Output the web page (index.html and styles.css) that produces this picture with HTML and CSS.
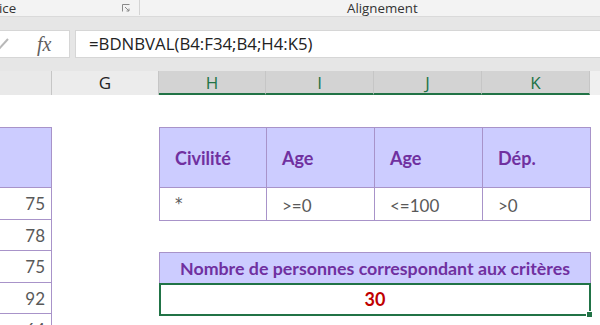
FILE: index.html
```html
<!DOCTYPE html>
<html lang="fr">
<head>
    <meta charset="UTF-8">
    <meta name="viewport" content="width=device-width, initial-scale=1.0">
    <title>BDNBVAL</title>
    <link rel="stylesheet" href="styles.css">
</head>
<body>
    <div class="ribbon">
        <div class="group groupLeft">
            <span class="groupName">ice</span>
            <svg class="launcher" width="8" height="8" viewBox="0 0 8 8">
                <path d="M0.5 7.5V0.5H7.5" fill="none" stroke="#8a8a8a" stroke-width="1"/>
                <path d="M3 3L7 7M4.5 7H7V4.5" fill="none" stroke="#8a8a8a" stroke-width="1"/>
            </svg>
        </div>
        <div class="group groupAlign">
            <span class="groupName">Alignement</span>
        </div>
    </div>

    <div class="formulaRow">
        <div class="nameBox">
            <svg class="check" width="10" height="14" viewBox="0 0 10 14">
                <path d="M-2 13L8 2" fill="none" stroke="#b8b8b8" stroke-width="2"/>
            </svg>
            <span class="fx">fx</span>
        </div>
        <div class="formula">=BDNBVAL(B4:F34;B4;H4:K5)</div>
    </div>

    <div class="colHeaders">
        <div class="colHead colF"></div>
        <div class="colHead colG">G</div>
        <div class="colHead sel wide107">H</div>
        <div class="colHead sel wide108">I</div>
        <div class="colHead sel wide108">J</div>
        <div class="colHead sel wide108">K</div>
        <div class="colHead colRest"></div>
    </div>

    <div class="sheet">
        <div class="leftTable">
            <div class="cell headCell"></div>
            <div class="cell num">75</div>
            <div class="cell num">78</div>
            <div class="cell num">75</div>
            <div class="cell num">92</div>
            <div class="cell num">64</div>
        </div>

        <div class="colSpacer"></div>

        <div class="rightBlock">
            <table class="criteria">
                <colgroup>
                    <col class="c107">
                    <col class="c108">
                    <col class="c108">
                    <col class="c108">
                </colgroup>
                <tr class="critHead">
                    <th>Civilité</th>
                    <th>Age</th>
                    <th>Age</th>
                    <th>Dép.</th>
                </tr>
                <tr class="critRow">
                    <td class="star">*</td>
                    <td>&gt;=0</td>
                    <td>&lt;=100</td>
                    <td>&gt;0</td>
                </tr>
            </table>

            <div class="resultHead">Nombre de personnes correspondant aux critères</div>
            <div class="resultBox">
                30
                <span class="handle"></span>
            </div>
        </div>
    </div>
</body>
</html>
```

FILE: styles.css
```css
body{
    margin: 0;
    width: 600px; height: 325px;
    overflow: hidden;
    background-color: #ffffff;
    font-family: "Open Sans", "Noto Sans", sans-serif;
}

/* ribbon strip */
.ribbon{
    display: flex;
    height: 17px;
    background-color: #f3f3f3;
    border-bottom: 1px solid #dadada;
    box-sizing: border-box;
}
.group{
    display: flex; align-items: center;
    height: 15px;
    font-size: 13.3px; color: #333;
}
.groupLeft{
    width: 140px;
    border-right: 1px solid #d4d4d4;
    box-sizing: border-box;
    justify-content: space-between;
    padding-right: 9px;
}
.groupLeft .groupName{ margin-left: -1px; }
.launcher{ margin-top: 1px; }
.groupAlign{
    flex: 1;
    padding-left: 207px;
}

/* formula bar */
.formulaRow{
    display: flex;
    gap: 5px;
    height: 41px;
    padding-top: 13px;
    box-sizing: border-box;
    background-color: #e6e6e6;
}
.nameBox, .formula{
    background-color: #fff;
    border-top: 1px solid #d6d6d6;
    border-bottom: 1px solid #d6d6d6;
    height: 28px;
    box-sizing: border-box;
}
.nameBox{
    width: 70px;
    display: flex; align-items: center;
    border-right: 1px solid #d6d6d6;
}
.fx{
    margin-left: 27px;
    font-family: "Liberation Serif", serif;
    font-style: italic;
    font-size: 20px;
    color: #606060;
}
.formula{
    flex: 1;
    border-left: 1px solid #d6d6d6;
    padding-left: 13px;
    font-size: 16.8px;
    line-height: 26px;
    color: #222;
}

/* column letters */
.colHeaders{
    display: flex;
    height: 37px;
    padding-top: 13px;
    box-sizing: border-box;
    background-color: #e6e6e6;
}
.colHead{
    height: 24px;
    box-sizing: border-box;
    border-right: 1px solid #c6c6c6;
    background-color: #e6e6e6;
    text-align: center;
    font-size: 17px; line-height: 24px;
    color: #222;
}
.colF{ width: 52px; background-color: #e9e9e9; }
.colG{ width: 107px; background-color: #ececec; }
.sel{
    background-color: #d3d3d3;
    color: #217346;
    border-bottom: 2px solid #217346;
    line-height: 23px;
}
.wide107{ width: 107px; }
.wide108{ width: 108px; }
.colRest{ flex: 1; border-right: none; background-color: #f0f0f0; }

/* sheet */
.sheet{
    display: flex;
    padding-top: 32px;
}
.leftTable{
    width: 52px;
    display: flex; flex-direction: column;
}
.cell{
    border-right: 1px solid #a893c9;
    border-bottom: 1px solid #a893c9;
    box-sizing: border-box;
    height: 31.5px;
}
.headCell{
    height: 61px;
    border-top: 1px solid #a893c9;
    background-color: #ccccff;
}
.num{
    text-align: right;
    padding-right: 6px;
    font-size: 17px;
    line-height: 31px;
    color: #595959;
    font-family: "Lato", "Open Sans", sans-serif;
}
.colSpacer{ width: 107px; }

.rightBlock{
    width: 432px;
    display: flex; flex-direction: column;
}
.criteria{
    border-collapse: collapse;
    table-layout: fixed;
    width: 432px;
    font-family: "Lato", "Open Sans", sans-serif;
}
.c107{ width: 107px; }
.c108{ width: 108px; }
.criteria th, .criteria td{
    border: 1px solid #a893c9;
    text-align: left;
    padding: 0 0 0 15px;
}
.critHead th{
    height: 59px;
    background-color: #ccccff;
    color: #7030a0;
    font-size: 18px;
    font-weight: bold;
}
.critRow td{
    height: 30px;
    color: #595959;
    font-size: 17px;
    padding-top: 2px;
}
.critRow .star{
    font-family: "DejaVu Sans", sans-serif;
    font-size: 15px;
    padding-top: 0;
}

.resultHead{
    margin-top: 31px;
    height: 31px;
    box-sizing: border-box;
    background-color: #ccccff;
    border: 1px solid #a893c9;
    border-bottom: none;
    text-align: center;
    color: #7030a0;
    font-family: "Lato", "Open Sans", sans-serif;
    font-weight: bold;
    font-size: 17.8px;
    line-height: 30px;
}
.resultBox{
    position: relative;
    height: 33px;
    box-sizing: border-box;
    border: 2px solid #217346;
    text-align: center;
    color: #c00000;
    font-family: "Lato", "Open Sans", sans-serif;
    font-weight: bold;
    font-size: 18px;
    line-height: 29px;
}
.handle{
    position: absolute;
    right: -4px; bottom: -4px;
    width: 5px; height: 5px;
    background-color: #217346;
    border: 1px solid #fff;
}
```
